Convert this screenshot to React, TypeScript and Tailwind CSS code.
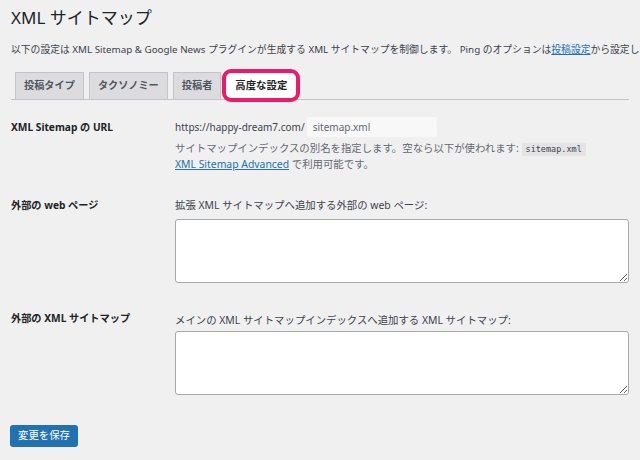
import React from 'react'

const font = { fontFamily: '"Noto Sans", "Noto Sans CJK JP", sans-serif' }

function Tab({ label, active }: { label: string; active?: boolean }) {
  if (active) {
    return (
      <div className="relative -ml-[4px] flex h-[33px] items-center rounded-[9px] border-[4px] border-[#ec1a6b] bg-white px-[9px] text-[10.4px] font-bold text-[#1d2327] -mb-[3px]">
        {label}
      </div>
    )
  }
  return (
    <div className="flex h-[27px] items-center border border-b-0 border-[#c3c4c7] bg-[#dcdcde] px-[8px] text-[10.2px] font-semibold text-[#50575e]">
      {label}
    </div>
  )
}

export default function App() {
  return (
    <div className="h-[460px] w-[640px] overflow-hidden bg-[#f0f0f1] pl-[11px] pr-[11px] text-[#3c434a]" style={font}>
      <h1 className="pt-[6px] text-[17px] leading-[24px] text-[#1d2327]">XML サイトマップ</h1>
      <p className="mt-[13px] whitespace-nowrap text-[9.8px] leading-[14px] text-[#3c434a]">
        以下の設定は XML Sitemap &amp; Google News プラグインが生成する XML サイトマップを制御します。 Ping のオプションは
        <span className="text-[#2271b1] underline">投稿設定</span>から設定して
      </p>

      <div className="mt-[12px] flex items-end gap-[5px] border-b border-[#c3c4c7] pl-[4px]">
        <Tab label="投稿タイプ" />
        <Tab label="タクソノミー" />
        <Tab label="投稿者" />
        <Tab label="高度な設定" active />
      </div>

      <div className="flex pt-[17px]">
        <div className="w-[164px] pt-[1px] text-[10.2px] font-bold leading-[18px] text-[#1d2327]">XML Sitemap の URL</div>
        <div className="flex-1 text-[10.4px]">
          <div className="flex h-[20px] items-center text-[10px]">
            <span className="mr-[2px] text-[#3c434a]">https://happy-dream7.com/</span>
            <div className="flex h-[20px] w-[130px] items-center rounded-[3px] bg-[#f8f8f8] px-[6px] text-[#646970]">sitemap.xml</div>
          </div>
          <p className="mt-[3px] leading-[16px] text-[#646970]">
            サイトマップインデックスの別名を指定します。空なら以下が使われます:{' '}
            <code
              className="inline-block bg-[#e4e4e4] px-[4px] text-[8.5px] leading-[13px] text-[#3c434a] align-middle"
              style={{ fontFamily: '"DejaVu Sans Mono", monospace' }}
            >
              sitemap.xml
            </code>
            <br />
            <span className="text-[#2271b1] underline">XML Sitemap Advanced</span> で利用可能です。
          </p>
        </div>
      </div>

      <div className="flex pt-[25px]">
        <div className="w-[164px] text-[10.2px] font-bold leading-[16px] text-[#1d2327]">外部の web ページ</div>
        <div className="flex-1 text-[10.4px]">
          <p className="leading-[16px]">拡張 XML サイトマップへ追加する外部の web ページ:</p>
          <textarea
            readOnly
            className="mt-[6px] block h-[64px] w-full rounded-[3px] border border-[#a7aaad] bg-white"
          />
        </div>
      </div>

      <div className="flex pt-[29px]">
        <div className="w-[164px] -mt-[2px] text-[10.2px] font-bold leading-[16px] text-[#1d2327]">外部の XML サイトマップ</div>
        <div className="flex-1 text-[10.4px]">
          <p className="leading-[16px]">メインの XML サイトマップインデックスへ追加する XML サイトマップ:</p>
          <textarea
            readOnly
            className="mt-[3px] block h-[64px] w-full rounded-[3px] border border-[#a7aaad] bg-white"
          />
        </div>
      </div>

      <button className="-ml-[1px] mt-[30px] flex h-[22px] items-center rounded-[3px] bg-[#2271b1] px-[8px] text-[10.4px] text-white">
        変更を保存
      </button>
    </div>
  )
}
